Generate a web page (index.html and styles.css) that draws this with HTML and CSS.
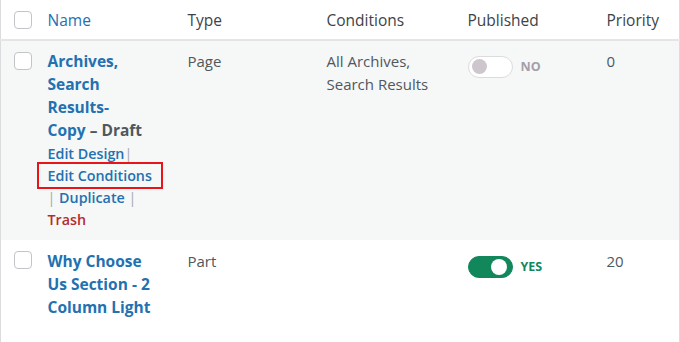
FILE: index.html
```html
<!DOCTYPE html>
<html lang="en">
  <head>
    <meta charset="UTF-8" />
    <meta name="viewport" content="width=device-width, initial-scale=1.0" />
    <title>Templates</title>
    <link rel="stylesheet" href="styles.css">
  </head>
  <body>
    <table class="list-table">
      <colgroup>
        <col class="col-check" />
        <col class="col-name" />
        <col class="col-type" />
        <col class="col-conditions" />
        <col class="col-published" />
        <col class="col-priority" />
      </colgroup>
      <thead>
        <tr>
          <th class="check-column"><span class="checkbox"></span></th>
          <th class="sortable"><a href="#">Name</a></th>
          <th>Type</th>
          <th>Conditions</th>
          <th>Published</th>
          <th>Priority</th>
        </tr>
      </thead>
      <tbody>
        <tr class="alternate">
          <td class="check-column"><span class="checkbox"></span></td>
          <td class="name-column">
            <strong class="row-title"><a href="#">Archives, Search Results-Copy</a>&nbsp;<span class="post-state">–&nbsp;Draft</span></strong>
            <div class="row-actions">
              <span class="edit"><a href="#">Edit Design</a><span class="sep">|</span></span>
              <span class="conditions"><a href="#" class="highlight">Edit Conditions</a> <span class="sep">|</span></span>
              <span class="duplicate"><a href="#">Duplicate</a> <span class="sep">|</span></span>
              <span class="trash"><a href="#">Trash</a></span>
            </div>
          </td>
          <td>Page</td>
          <td>All Archives, Search Results</td>
          <td>
            <div class="toggle">
              <span class="switch"><span class="knob"></span></span>
              <span class="toggle-label">NO</span>
            </div>
          </td>
          <td>0</td>
        </tr>
        <tr class="last">
          <td class="check-column"><span class="checkbox"></span></td>
          <td class="name-column">
            <strong class="row-title"><a href="#">Why Choose Us Section - 2 Column Light</a></strong>
          </td>
          <td>Part</td>
          <td></td>
          <td>
            <div class="toggle on">
              <span class="switch"><span class="knob"></span></span>
              <span class="toggle-label">YES</span>
            </div>
          </td>
          <td>20</td>
        </tr>
      </tbody>
    </table>
  </body>
</html>
```

FILE: styles.css
```css
* {
  padding: 0;
  margin: 0;
  box-sizing: border-box;
}

body {
  background-color: #fff;
  font-family: "Open Sans", sans-serif;
  color: #50575e;
}

a {
  text-decoration: none;
  color: #2271b1;
}

.list-table {
  width: 680px;
  table-layout: fixed;
  border-collapse: collapse;
  border-left: 1px solid #dcdcde;
  border-right: 1px solid #dcdcde;
  border-bottom: 1px solid #dcdcde;
}

.col-check {
  width: 37px;
}
.col-name {
  width: 140px;
}
.col-type {
  width: 139px;
}
.col-conditions {
  width: 141px;
}
.col-published {
  width: 139px;
}

.list-table th {
  height: 40px;
  padding: 1px 10px 0;
  text-align: left;
  font-weight: 400;
  font-size: 15.5px;
  color: #3c434a;
  border-bottom: 2px solid #e5e5e5;
}

.list-table td {
  padding: 9px 10px;
  vertical-align: top;
  font-size: 15px;
  line-height: 23px;
}

.list-table .check-column {
  padding-left: 13px;
  padding-right: 0;
}

.list-table td.check-column {
  padding-top: 11px;
}

.checkbox {
  display: block;
  width: 18px;
  height: 18px;
  border: 1px solid #c3c4c7;
  border-radius: 4px;
  background-color: #fff;
}

.alternate {
  background-color: #f6f7f7;
}

.last td {
  padding-top: 10px;
  padding-bottom: 30px;
}

.list-table td.name-column {
  padding-right: 20px;
}

.row-title {
  display: block;
  font-size: 15.5px;
  font-weight: 700;
  line-height: 23px;
}

.post-state {
  color: #50575e;
}

.row-actions {
  margin-top: 1px;
  font-size: 14.3px;
  font-weight: 600;
  line-height: 22px;
}

.sep {
  font-weight: 400;
  color: #a7aaad;
}

.trash a {
  color: #b32d2e;
}

.highlight {
  position: relative;
}

.highlight::after {
  content: "";
  position: absolute;
  left: -11px;
  right: -11px;
  top: -4px;
  bottom: -4px;
  border: 2px solid #e8141a;
}

.toggle {
  display: flex;
  align-items: center;
  gap: 8px;
  margin-top: 5px;
}

.switch {
  display: flex;
  align-items: center;
  width: 45px;
  height: 22px;
  padding: 0 3px;
  border: 1px solid #dcdcde;
  border-radius: 11px;
  background-color: #fff;
}

.knob {
  width: 15px;
  height: 15px;
  border-radius: 50%;
  background-color: #cdc7cd;
}

.toggle-label {
  font-size: 12.5px;
  font-weight: 700;
  color: #a59fa7;
}

.toggle.on .switch {
  justify-content: flex-end;
  padding: 0 5px;
  border-color: #12875b;
  background-color: #12875b;
}

.toggle.on .knob {
  width: 16px;
  height: 16px;
  background-color: #fff;
}

.toggle.on .toggle-label {
  color: #12875b;
}
```
